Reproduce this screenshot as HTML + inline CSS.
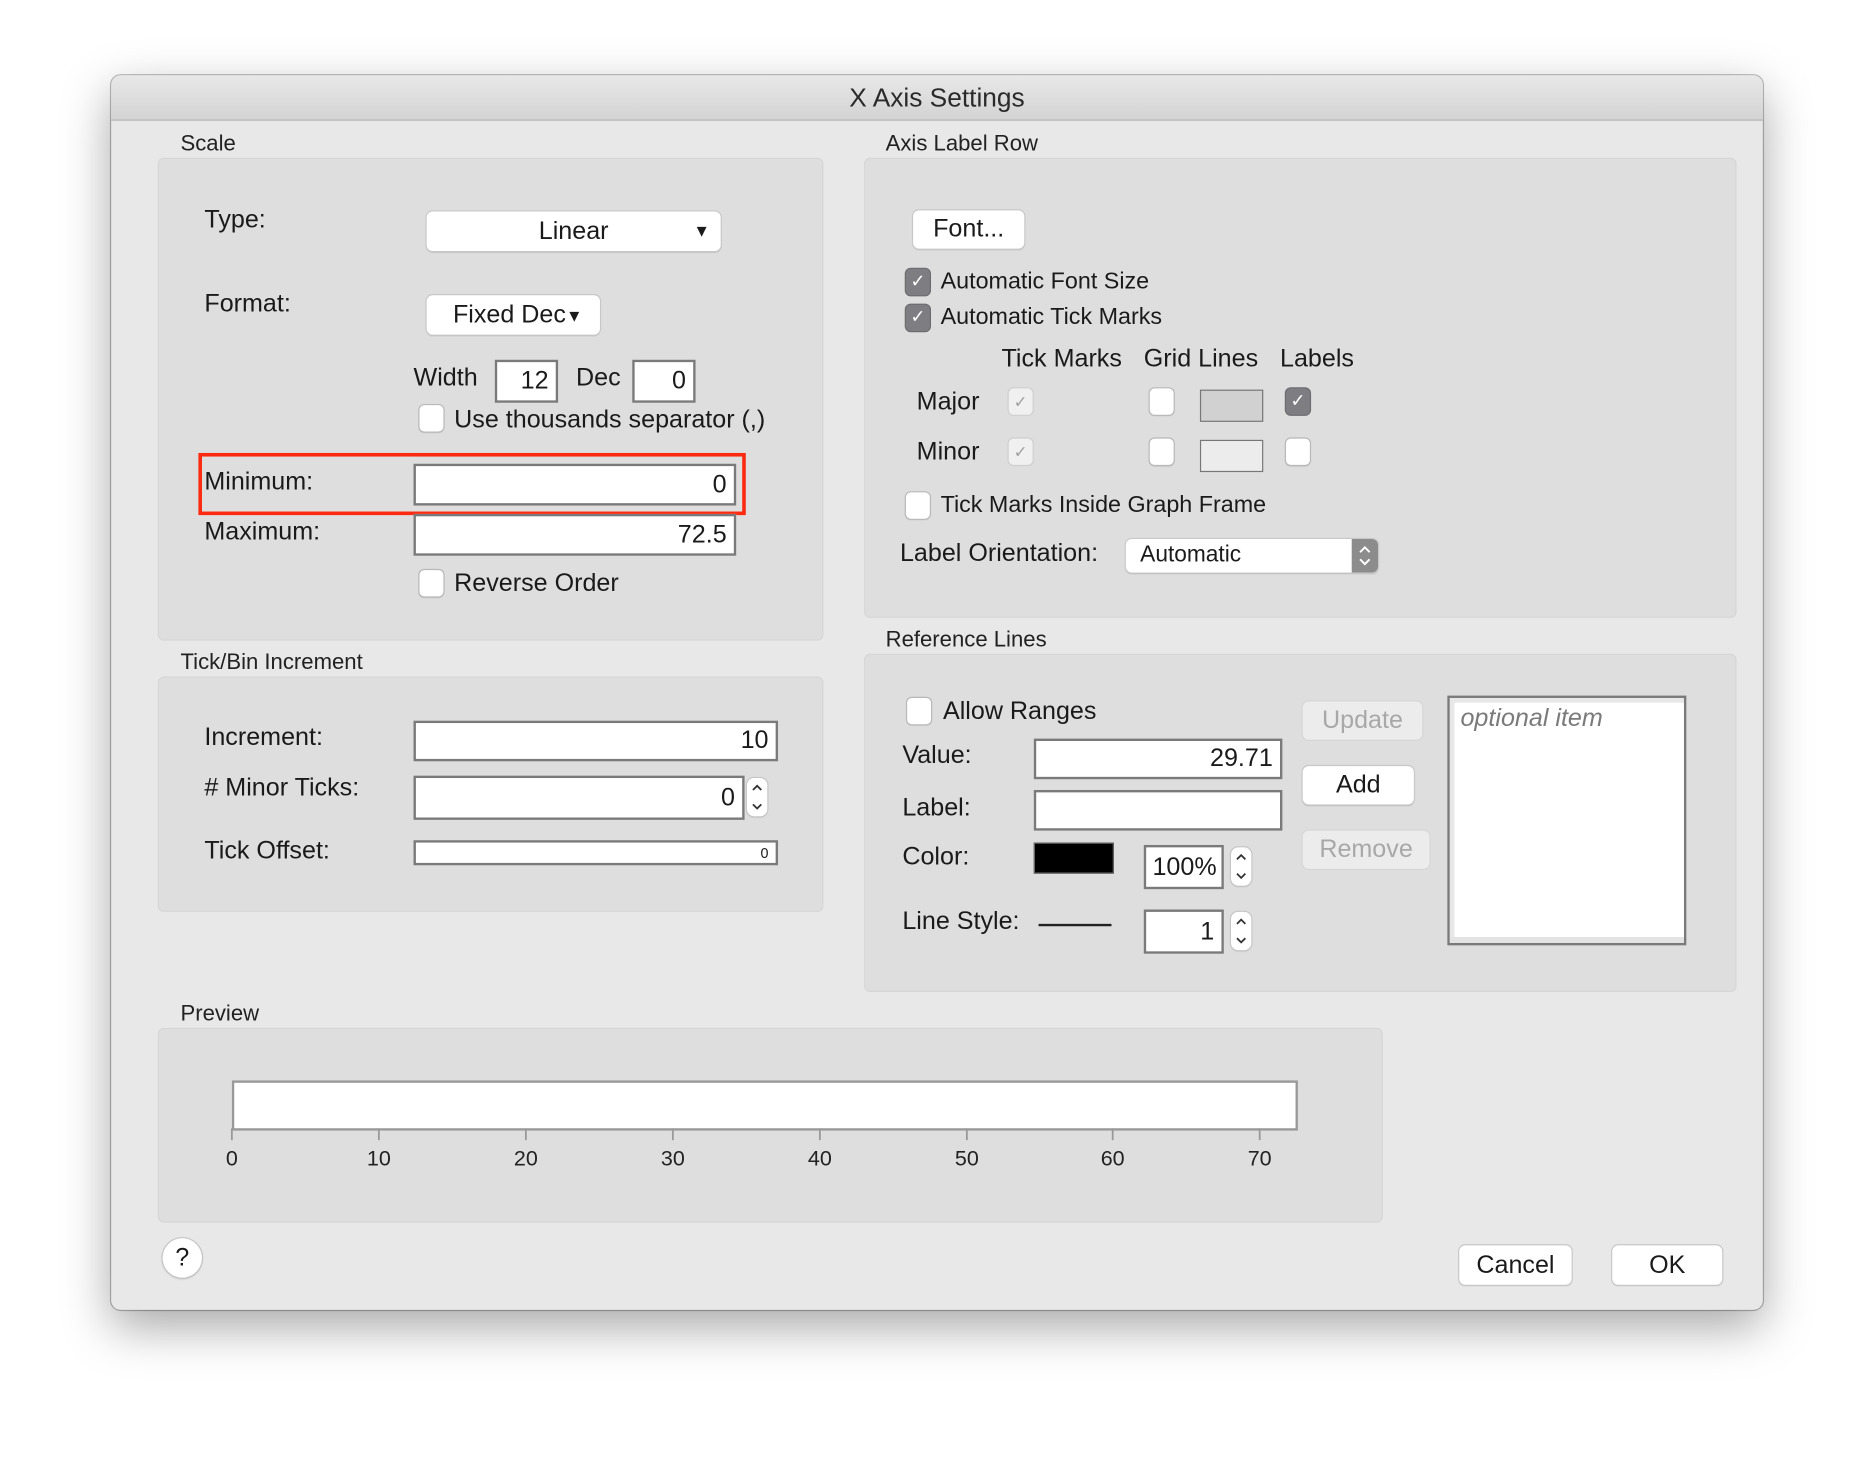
<!DOCTYPE html>
<html><head><meta charset="utf-8"><style>
html,body{margin:0;padding:0;background:#fff;overflow:hidden}
#s{position:absolute;left:0;top:0;width:1568px;height:1220px;transform:scale(1.19515);transform-origin:0 0;font-family:"Liberation Sans",sans-serif;color:#1a1a1a}
.a{position:absolute}
.t{position:absolute;transform:translateY(-50%);white-space:nowrap;font-size:21px;line-height:1}
.h{font-size:18.5px;color:#222}
.box{position:absolute;background:#dedede;border:1px solid #d6d6d6;border-radius:5px}
.in{position:absolute;background:#fff;border:2px solid #7a7a7a;box-sizing:border-box;text-align:right;font-size:20px;padding-right:6px;display:flex;align-items:center;justify-content:flex-end}
.btn{position:absolute;background:#fff;border-radius:5px;box-shadow:0 0 0 1px #c8c8c8,0 1px 1px rgba(0,0,0,.2);display:flex;align-items:center;justify-content:center;font-size:20px;box-sizing:border-box}
.dis{background:#ececec;color:#a8a8a8;box-shadow:0 0 0 1px #d6d6d6}
.cb{position:absolute;width:20px;height:22px;background:#fff;border-radius:4px;box-shadow:0 0 0 1px #b8b8b8,0 1px 1px rgba(0,0,0,.15);box-sizing:border-box}
.ck{background:#7d7d82;box-shadow:0 0 0 1px #6d6d70;color:#fff;font-size:15px;text-align:center;line-height:22px}
.ckd{background:#f0f0f0;color:#a0a0a0;font-size:14px;text-align:center;line-height:22px;box-shadow:0 0 0 1px #cfcfcf}
.step{position:absolute;width:17px;height:32px;background:#fff;border-radius:6px;box-shadow:0 0 0 1px #c6c6c6,0 1px 1px rgba(0,0,0,.15)}
</style></head><body><div id="s">
<div class="a" style="left:93px;top:63px;width:1382px;height:1033px;background:#e8e8e8;border-radius:8px;box-shadow:0 14px 40px rgba(0,0,0,.35),0 0 0 1px #bdbdbd;overflow:hidden">
 <div class="a" style="left:0;top:0;width:100%;height:37px;background:linear-gradient(#e8e8e8,#d3d3d3);border-bottom:1px solid #b4b4b4"></div>
</div>
<div class="t" style="left:0;width:1568px;text-align:center;top:82px;font-size:22px;color:#2a2a2a">X Axis Settings</div>

<div class="t h" style="left:151px;top:120px">Scale</div>
<div class="box" style="left:132px;top:132px;width:555px;height:402px"></div>
<div class="t" style="left:171px;top:184px">Type:</div>
<div class="btn" style="left:357px;top:177px;width:246px;height:33px;font-size:21px">Linear<span class="a" style="right:9px;top:8px;font-size:14px">&#9660;</span></div>
<div class="t" style="left:171px;top:254px">Format:</div>
<div class="btn" style="left:357px;top:247px;width:145px;height:33px;justify-content:flex-start;padding-left:22px;font-size:21px">Fixed Dec<span style="font-size:14px">&#9660;</span></div>
<div class="t" style="left:346px;top:316px;font-size:21px">Width</div>
<div class="in" style="left:414px;top:301px;width:53px;height:36px;font-size:21px">12</div>
<div class="t" style="left:482px;top:316px;font-size:21px">Dec</div>
<div class="in" style="left:529px;top:301px;width:53px;height:36px;font-size:21px">0</div>
<div class="cb" style="left:351px;top:339px"></div>
<div class="t" style="left:380px;top:351px;font-size:21px">Use thousands separator (,)</div>
<div class="a" style="left:166px;top:379px;width:452px;height:46px;border:3px solid #fb2a10"></div>
<div class="t" style="left:171px;top:403px">Minimum:</div>
<div class="in" style="left:346px;top:388px;width:270px;height:35px;font-size:21px">0</div>
<div class="t" style="left:171px;top:445px">Maximum:</div>
<div class="in" style="left:346px;top:430px;width:270px;height:35px;font-size:21px">72.5</div>
<div class="cb" style="left:351px;top:477px"></div>
<div class="t" style="left:380px;top:488px;font-size:21px">Reverse Order</div>

<div class="t h" style="left:151px;top:554px">Tick/Bin Increment</div>
<div class="box" style="left:132px;top:566px;width:555px;height:195px"></div>
<div class="t" style="left:171px;top:617px">Increment:</div>
<div class="in" style="left:346px;top:603px;width:305px;height:34px;font-size:21px">10</div>
<div class="t" style="left:171px;top:659px"># Minor Ticks:</div>
<div class="in" style="left:346px;top:649px;width:277px;height:37px;font-size:21px">0</div>
<div class="step" style="left:625px;top:651px"><svg width="17" height="32"><path d="M5 10l3.5-3.5L12 10M5 22l3.5 3.5L12 22" fill="none" stroke="#333" stroke-width="1.5"/></svg></div>
<div class="t" style="left:171px;top:712px">Tick Offset:</div>
<div class="in" style="left:346px;top:703px;width:305px;height:21px;font-size:12px">0</div>

<div class="t h" style="left:741px;top:120px">Axis Label Row</div>
<div class="box" style="left:723px;top:132px;width:728px;height:383px"></div>
<div class="btn" style="left:764px;top:176px;width:93px;height:32px;font-size:21px">Font...</div>
<div class="cb ck" style="left:758px;top:225px">&#10003;</div>
<div class="t" style="left:787px;top:236px;font-size:19.5px">Automatic Font Size</div>
<div class="cb ck" style="left:758px;top:255px">&#10003;</div>
<div class="t" style="left:787px;top:266px;font-size:19.5px">Automatic Tick Marks</div>
<div class="t" style="left:838px;top:300px;font-size:21px">Tick Marks</div>
<div class="t" style="left:957px;top:300px;font-size:21px">Grid Lines</div>
<div class="t" style="left:1071px;top:300px;font-size:21px">Labels</div>
<div class="t" style="left:767px;top:336px;font-size:21px">Major</div>
<div class="cb ckd" style="left:844px;top:325px">&#10003;</div>
<div class="cb" style="left:962px;top:325px"></div>
<div class="a" style="left:1004px;top:326px;width:53px;height:27px;background:#d1d1d1;border:1px solid #777;box-sizing:border-box"></div>
<div class="cb ck" style="left:1076px;top:325px">&#10003;</div>
<div class="t" style="left:767px;top:378px;font-size:21px">Minor</div>
<div class="cb ckd" style="left:844px;top:367px">&#10003;</div>
<div class="cb" style="left:962px;top:367px"></div>
<div class="a" style="left:1004px;top:368px;width:53px;height:27px;background:#ececec;border:1px solid #777;box-sizing:border-box"></div>
<div class="cb" style="left:1076px;top:367px"></div>
<div class="cb" style="left:758px;top:412px"></div>
<div class="t" style="left:787px;top:423px;font-size:19.5px">Tick Marks Inside Graph Frame</div>
<div class="t" style="left:753px;top:463px;font-size:21px">Label Orientation:</div>
<div class="btn" style="left:942px;top:451px;width:211px;height:28px;justify-content:flex-start;padding-left:12px;font-size:19px;overflow:hidden">Automatic
 <div class="a" style="right:0;top:0;width:22px;height:28px;background:#8c8c8c"><svg width="22" height="28"><path d="M7 11l4-4 4 4M7 17l4 4 4-4" fill="none" stroke="#fff" stroke-width="1.6"/></svg></div></div>

<div class="t h" style="left:741px;top:535px">Reference Lines</div>
<div class="box" style="left:723px;top:547px;width:728px;height:281px"></div>
<div class="cb" style="left:759px;top:584px"></div>
<div class="t" style="left:789px;top:595px;font-size:21px">Allow Ranges</div>
<div class="t" style="left:755px;top:632px;font-size:21px">Value:</div>
<div class="in" style="left:865px;top:618px;width:208px;height:34px;font-size:21px">29.71</div>
<div class="t" style="left:755px;top:676px;font-size:21px">Label:</div>
<div class="in" style="left:865px;top:661px;width:208px;height:34px"></div>
<div class="t" style="left:755px;top:717px;font-size:21px">Color:</div>
<div class="a" style="left:865px;top:705px;width:67px;height:26px;background:#000;border:1px solid #666;box-sizing:border-box"></div>
<div class="in" style="left:957px;top:707px;width:67px;height:37px;padding-right:4px;font-size:21px">100%</div>
<div class="step" style="left:1030px;top:709px"><svg width="17" height="32"><path d="M5 10l3.5-3.5L12 10M5 22l3.5 3.5L12 22" fill="none" stroke="#333" stroke-width="1.5"/></svg></div>
<div class="t" style="left:755px;top:771px;font-size:21px">Line Style:</div>
<div class="a" style="left:869px;top:773px;width:61px;height:2px;background:#222"></div>
<div class="in" style="left:957px;top:761px;width:67px;height:37px;font-size:21px">1</div>
<div class="step" style="left:1030px;top:763px"><svg width="17" height="32"><path d="M5 10l3.5-3.5L12 10M5 22l3.5 3.5L12 22" fill="none" stroke="#333" stroke-width="1.5"/></svg></div>
<div class="btn dis" style="left:1090px;top:587px;width:100px;height:32px;font-size:21px">Update</div>
<div class="btn" style="left:1090px;top:641px;width:93px;height:32px;font-size:21px">Add</div>
<div class="btn dis" style="left:1090px;top:695px;width:106px;height:32px;font-size:21px">Remove</div>
<div class="a" style="left:1211px;top:582px;width:200px;height:209px;background:#fff;border:2px solid #7a7a7a;box-sizing:border-box;box-shadow:inset 0 -5px 0 #e4e4e4,inset 4px 4px 0 #e8e8e8"></div>
<div class="t" style="left:1222px;top:601px;font-size:21px;font-style:italic;color:#7a7a7a">optional item</div>

<div class="t h" style="left:151px;top:848px">Preview</div>
<div class="box" style="left:132px;top:860px;width:1023px;height:161px"></div>
<div class="a" style="left:194px;top:904px;width:892px;height:42px;background:#fff;border:2px solid #999;box-sizing:border-box"></div>
<svg class="a" style="left:180px;top:944px" width="900" height="40">
 <g stroke="#999" stroke-width="1.5">
  <path d="M14 0v10M137 0v10M260 0v10M383 0v10M506 0v10M629 0v10M751 0v10M874 0v10"/>
 </g>
 <g font-family="Liberation Sans" font-size="18" fill="#222" text-anchor="middle">
  <text x="14" y="31">0</text><text x="137" y="31">10</text><text x="260" y="31">20</text><text x="383" y="31">30</text><text x="506" y="31">40</text><text x="629" y="31">50</text><text x="751" y="31">60</text><text x="874" y="31">70</text>
 </g>
</svg>

<div class="a" style="left:136px;top:1036px;width:33px;height:33px;border-radius:50%;background:#fff;box-shadow:0 0 0 1px #c4c4c4,0 1px 2px rgba(0,0,0,.25);text-align:center;line-height:33px;font-size:21px">?</div>
<div class="btn" style="left:1221px;top:1042px;width:94px;height:33px;font-size:21px">Cancel</div>
<div class="btn" style="left:1349px;top:1042px;width:92px;height:33px;font-size:21px">OK</div>
</div></body></html>
